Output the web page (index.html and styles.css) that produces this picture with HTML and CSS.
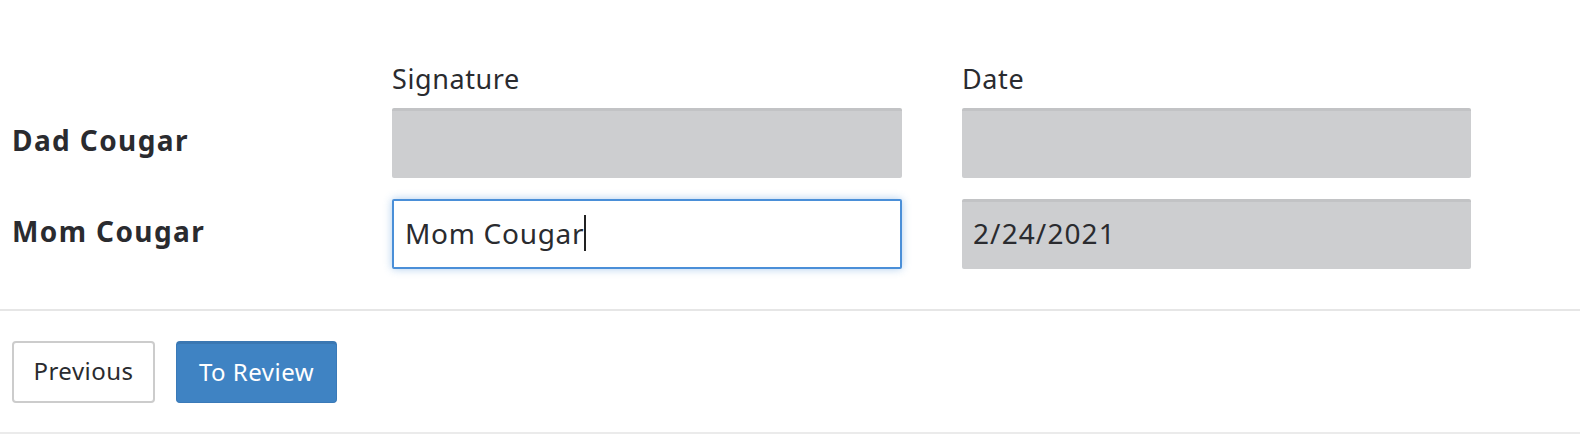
FILE: index.html
```html
<!DOCTYPE html>
<html>
<head>
<meta charset="utf-8">
<link rel="stylesheet" href="styles.css">
</head>
<body>
<div class="page">
  <div class="sig-grid">
    <div class="col-head"></div>
    <div class="col-head">Signature</div>
    <div class="col-head">Date</div>

    <div class="person">Dad Cougar</div>
    <div class="field disabled"></div>
    <div class="field disabled"></div>

    <div class="person">Mom Cougar</div>
    <div class="field focused"><span class="value">Mom Cougar</span><span class="caret"></span></div>
    <div class="field disabled"><span class="value date">2/24/2021</span></div>
  </div>
  <div class="actions">
    <button class="btn btn-default">Previous</button>
    <button class="btn btn-primary">To Review</button>
  </div>
</div>
</body>
</html>
```

FILE: styles.css
```css
html, body {
  margin: 0;
  padding: 0;
  background: #ffffff;
}
body {
  font-family: "Noto Sans", "DejaVu Sans", sans-serif;
  color: #2a2b2f;
}
.page {
  width: 1580px;
  height: 434px;
  box-sizing: border-box;
  border-bottom: 2px solid #ebebeb;
}
.sig-grid {
  display: grid;
  grid-template-columns: 320px 510px 509px;
  column-gap: 60px;
  row-gap: 21px;
  padding: 65px 0 0 12px;
  align-items: center;
}
.col-head {
  font-size: 27px;
  letter-spacing: 0.6px;
  line-height: 36px;
  margin-bottom: -14px;
  align-self: end;
  position: relative;
  top: -4px;
}
.person {
  font-size: 28px;
  letter-spacing: 1.4px;
  font-weight: 700;
  padding-bottom: 7px;
}
.field {
  height: 70px;
  box-sizing: border-box;
  display: flex;
  align-items: center;
  padding: 0 11px 3px;
  font-size: 28px;
  letter-spacing: 0.7px;
  border-radius: 2px;
}
.field .date {
  letter-spacing: 1.1px;
}
.field.disabled {
  background: #cdced0;
  border-top: 3px solid #c2c3c5;
  padding-bottom: 6px;
}
.field.focused {
  background: #ffffff;
  border: 2px solid #4a8fd8;
  box-shadow: 0 0 8px rgba(74, 143, 216, 0.45);
}
.caret {
  display: inline-block;
  width: 2px;
  height: 36px;
  background: #222;
  margin-left: 0;
}
.actions {
  margin-top: 40px;
  border-top: 2px solid #e6e6e6;
  padding: 30px 12px 0;
  display: flex;
  gap: 21px;
}
.btn {
  font-family: "Noto Sans", "DejaVu Sans", sans-serif;
  font-size: 24px;
  letter-spacing: 0.5px;
  height: 62px;
  border-radius: 4px;
  padding: 0 0 3px;
  cursor: pointer;
}
.btn-default {
  width: 143px;
  background: #ffffff;
  border: 2px solid #cccccc;
  color: #2a2b2f;
}
.btn-primary {
  width: 161px;
  background: #3f83c3;
  border: 1px solid #3a7ab8;
  border-top: 3px solid #3a77b2;
  color: #ffffff;
}
```
